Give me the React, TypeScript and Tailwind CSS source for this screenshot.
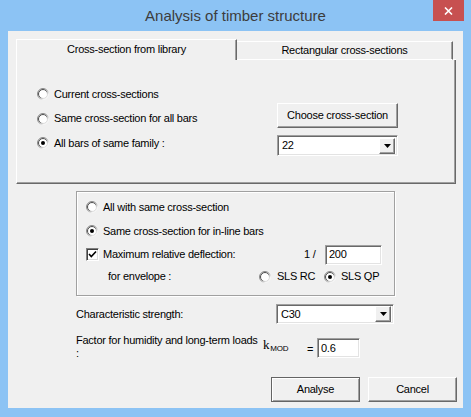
import React from "react";

const Radio = ({ checked = false }: { checked?: boolean }) => (
  <svg width="12" height="12" viewBox="0 0 12 12" className="shrink-0">
    <defs>
      <linearGradient id="ro" x1="0" y1="0" x2="1" y2="1">
        <stop offset="0" stopColor="#7a7a7a" />
        <stop offset="0.5" stopColor="#9a9a9a" />
        <stop offset="0.75" stopColor="#f4f4f4" />
        <stop offset="1" stopColor="#ffffff" />
      </linearGradient>
      <linearGradient id="ri" x1="0" y1="0" x2="1" y2="1">
        <stop offset="0" stopColor="#3c3c3c" />
        <stop offset="0.5" stopColor="#5a5a5a" />
        <stop offset="0.75" stopColor="#dcdcdc" />
        <stop offset="1" stopColor="#dcdcdc" />
      </linearGradient>
    </defs>
    <circle cx="6" cy="6" r="5.5" fill="none" stroke="url(#ro)" strokeWidth="1" />
    <circle cx="6" cy="6" r="4.5" fill="#ffffff" stroke="url(#ri)" strokeWidth="1" />
    {checked && <circle cx="6" cy="6" r="2" fill="#000000" />}
  </svg>
);

const Check = () => (
  <div className="w-[13px] h-[13px] shrink-0 bg-white border-t border-l border-[#808080] border-r border-b border-r-white border-b-white shadow-[inset_1px_1px_0_#404040,inset_-1px_-1px_0_#dcdcdc] flex items-center justify-center">
    <svg width="9" height="9" viewBox="0 0 9 9">
      <path d="M1 4 L3.3 6.5 L8 1.5" stroke="#000" strokeWidth="1.6" fill="none" />
    </svg>
  </div>
);

const Sunken = ({ className = "", children }: { className?: string; children?: React.ReactNode }) => (
  <div
    className={
      "bg-white border border-t-[#a0a0a0] border-l-[#a0a0a0] border-r-white border-b-white shadow-[inset_1px_1px_0_#696969,inset_-1px_-1px_0_#e3e3e3] flex items-center " +
      className
    }
  >
    {children}
  </div>
);

const Combo = ({ value, className = "" }: { value: string; className?: string }) => (
  <Sunken className={"pl-[4px] pr-[2px] " + className}>
    <span className="flex-1">{value}</span>
    <div className="w-[16px] h-[16px] bg-[#f0f0f0] border border-t-white border-l-white border-r-[#696969] border-b-[#696969] shadow-[inset_-1px_-1px_0_#a0a0a0] flex items-center justify-center">
      <svg width="7" height="4" viewBox="0 0 7 4">
        <path d="M0 0 H7 L3.5 4 Z" fill="#000" />
      </svg>
    </div>
  </Sunken>
);

export default function App() {
  return (
    <div className="w-[471px] h-[417px] bg-[#8cc3f4] relative flex flex-col font-['Liberation_Sans',Arial,sans-serif] text-[11px] tracking-[-0.25px] text-black leading-none">
      <div className="h-[31px] flex items-center justify-center text-[15px] tracking-normal text-[#3c3c3c] pb-[1px]">
        Analysis of timber structure
      </div>
      <div className="absolute left-[433px] top-0 w-[31px] h-[21px] bg-[#c75050] flex items-center justify-center">
        <svg width="9" height="8" viewBox="0 0 9 8">
          <path d="M1 0.5 L8 7.5 M8 0.5 L1 7.5" stroke="#fff" strokeWidth="1.6" />
        </svg>
      </div>

      <div className="mx-[8px] h-[377px] bg-[#f0f0f0] flex flex-col">
        {/* Tab control */}
        <div className="ml-[8px] mt-[8px] w-[440px]">
          <div className="flex items-end h-[21px]">
            <div className="w-[221px] h-[21px] bg-[#f0f0f0] border-t border-l border-white border-r border-r-[#696969] shadow-[inset_-1px_0_0_#a0a0a0] flex items-center justify-center pb-[2px]">
              Cross-section from library
            </div>
            <div className="w-[216px] h-[19px] bg-[#f0f0f0] border-t border-white border-b border-b-white border-r border-r-[#696969] shadow-[inset_-1px_0_0_#a0a0a0] flex items-center justify-center">
              Rectangular cross-sections
            </div>
            <div className="flex-1 h-[1px] bg-white"></div>
          </div>
          <div className="h-[124px] border-l border-white border-r border-b border-r-[#696969] border-b-[#696969] shadow-[inset_-1px_-1px_0_#a0a0a0] flex">
            <div className="pl-[20px] pt-[22px] flex flex-col">
              <div className="h-[24px] flex items-center gap-[5px]">
                <Radio />
                <span>Current cross-sections</span>
              </div>
              <div className="h-[25px] flex items-center gap-[5px]">
                <Radio />
                <span>Same cross-section for all bars</span>
              </div>
              <div className="h-[24px] flex items-center gap-[5px]">
                <Radio checked />
                <span>All bars of same family :</span>
              </div>
            </div>
            <div className="ml-auto mr-[57px] pt-[43px] w-[121px] flex flex-col">
              <div className="h-[25px] w-[121px] border border-t-white border-l-white border-r-[#696969] border-b-[#696969] shadow-[inset_-1px_-1px_0_#a0a0a0] bg-[#f0f0f0] flex items-center justify-center">
                Choose cross-section
              </div>
              <Combo value="22" className="mt-[7px] h-[21px] w-[121px]" />
            </div>
          </div>
        </div>

        {/* Group box */}
        <div className="ml-[68px] mt-[7px] w-[319px] h-[105px] border border-[#a0a0a0] shadow-[inset_1px_1px_0_#fff,1px_1px_0_#fff] pl-[9px] pt-[3px] flex flex-col">
          <div className="h-[24px] flex items-center gap-[5px]">
            <Radio />
            <span>All with same cross-section</span>
          </div>
          <div className="h-[24px] flex items-center gap-[5px]">
            <Radio checked />
            <span>Same cross-section for in-line bars</span>
          </div>
          <div className="h-[23px] flex items-center">
            <Check />
            <span className="ml-[4px] w-[201px]">Maximum relative deflection:</span>
            <span className="w-[21px]">1 /</span>
            <Sunken className="w-[57px] h-[20px] pl-[3px]">200</Sunken>
          </div>
          <div className="h-[21px] flex items-center">
            <span className="ml-[22px] w-[151px]">for envelope :</span>
            <Radio />
            <span className="ml-[6px] w-[47px]">SLS RC</span>
            <Radio checked />
            <span className="ml-[5px]">SLS QP</span>
          </div>
        </div>

        {/* Characteristic strength */}
        <div className="mt-[8px] ml-[68px] h-[20px] flex items-center">
          <span className="w-[200px]">Characteristic strength:</span>
          <Combo value="C30" className="w-[118px] h-[20px]" />
        </div>

        {/* Factor */}
        <div className="mt-[8px] ml-[68px] flex items-start">
          <div className="w-[187px] leading-[13px] pt-[2px] whitespace-nowrap">
            Factor for humidity and long-term loads
            <br />:
          </div>
          <div className="flex items-end pt-[6px] w-[44px]">
            <span className="font-['Liberation_Serif',serif] text-[13px]">k</span>
            <span className="text-[8px] mb-[-2px] ml-[1px]">MOD</span>
          </div>
          <span className="pt-[12px] w-[10px]">=</span>
          <Sunken className="mt-[6px] w-[43px] h-[20px] pl-[3px]">0.6</Sunken>
        </div>

        {/* Buttons */}
        <div className="mt-auto mb-[6px] mr-[6px] flex justify-end gap-[8px]">
          <div className="w-[89px] h-[25px] border border-[#646464] bg-[#f0f0f0] shadow-[inset_1px_1px_0_#fff,inset_-1px_-1px_0_#a0a0a0] flex items-center justify-center">
            Analyse
          </div>
          <div className="w-[89px] h-[25px] border border-t-white border-l-white border-r-[#696969] border-b-[#696969] shadow-[inset_-1px_-1px_0_#a0a0a0] bg-[#f0f0f0] flex items-center justify-center">
            Cancel
          </div>
        </div>
      </div>
    </div>
  );
}
